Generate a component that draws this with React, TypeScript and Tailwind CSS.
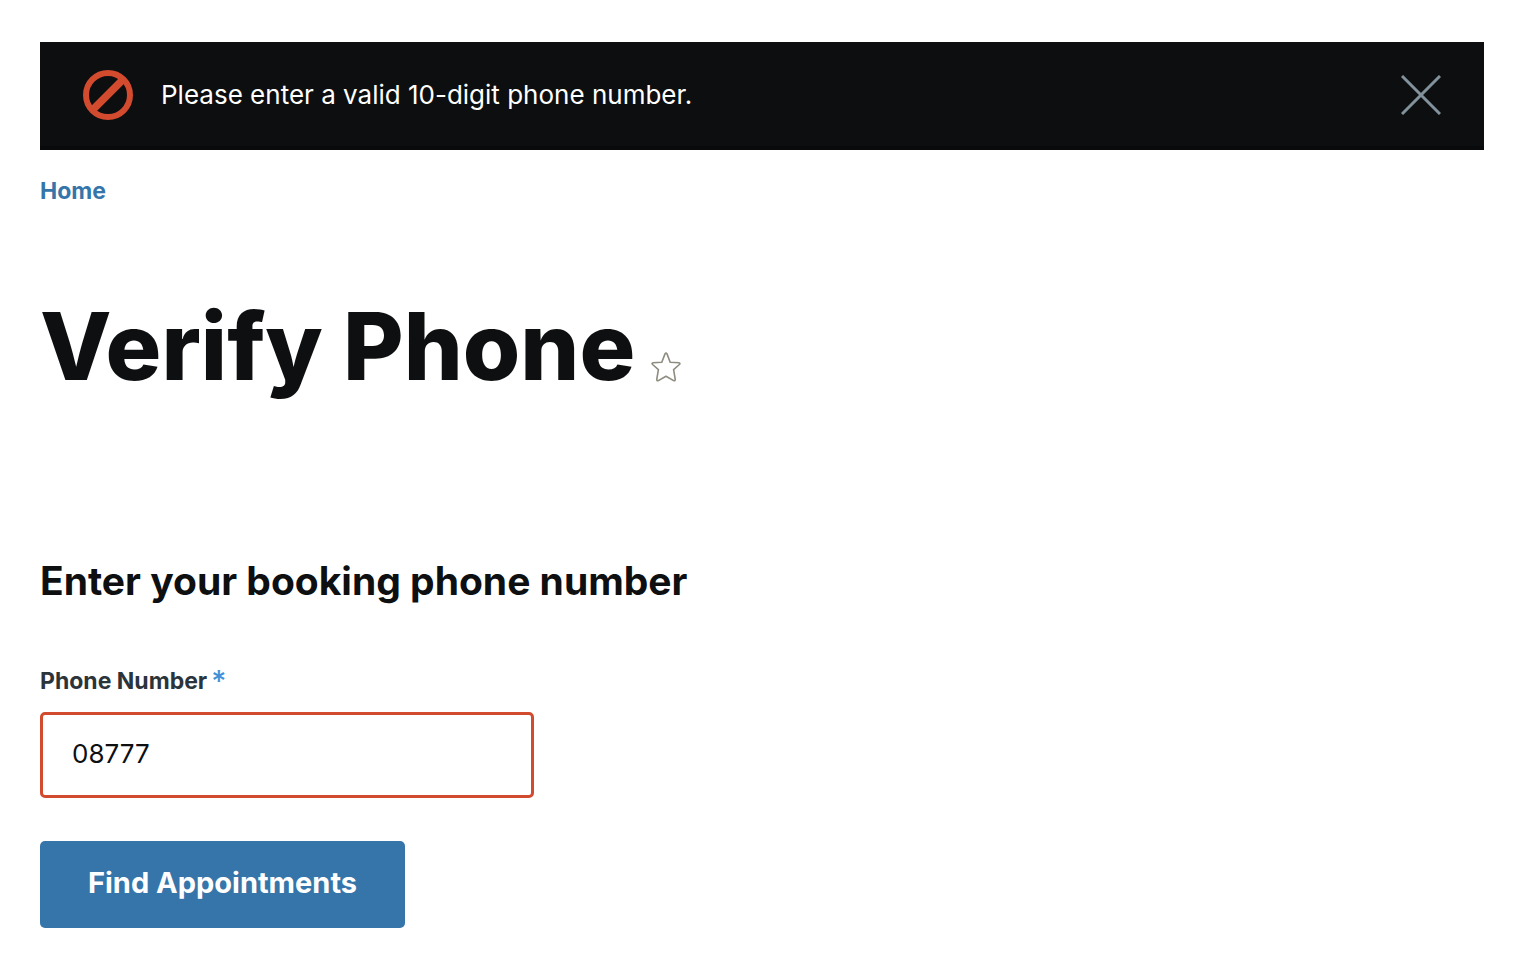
import { useState } from "react";

function BannedIcon() {
  return (
    <svg className="size-[50px] shrink-0" viewBox="0 0 50 50" fill="none" stroke="#d24b2f" aria-hidden="true">
      <circle cx="25" cy="25" r="22" strokeWidth="6" />
      <path d="M9.5 40 40 9.5" strokeWidth="7.5" />
    </svg>
  );
}

function CloseIcon() {
  return (
    <svg className="size-10" viewBox="0 0 40 40" fill="none" stroke="#82929c" strokeWidth="3" aria-hidden="true">
      <path d="M1 1l38 38M39 1L1 39" />
    </svg>
  );
}

function StarIcon() {
  return (
    <svg className="size-[30px]" viewBox="0 0 30 30" fill="none" stroke="#8e8c7f" strokeWidth="1.6" strokeLinejoin="round" aria-hidden="true">
      <path d="M14 1.9Q15 .4 16 1.9L19.2 10.3 27.9 10.7Q29.7 11.1 28.4 12.5L22.6 17.6 24.2 27.2Q24.3 29.2 22.6 28.6L15 24.2 7.4 28.6Q5.7 29.2 5.8 27.2L7.4 17.6 1.6 12.5Q.3 11.1 2.1 10.7L10.8 10.3Z" />
    </svg>
  );
}

export default function App() {
  const [phone, setPhone] = useState("08777");
  const [alertOpen, setAlertOpen] = useState(true);

  return (
    <div className="min-h-screen bg-white pt-[42px] pr-[38px] pb-7 pl-10 font-['Inter',sans-serif] text-[#0d0f10]">
      {alertOpen && (
        <div role="alert" className="flex items-center justify-between border-b-4 border-[#090a0b] bg-[#0c0e0f] pt-7 pr-[43px] pb-[26px] pl-[43px]">
          <div className="flex items-center gap-7">
            <BannedIcon />
            <p className="text-[26px] leading-8 text-white">Please enter a valid 10-digit phone number.</p>
          </div>
          <button type="button" aria-label="Close" onClick={() => setAlertOpen(false)}>
            <CloseIcon />
          </button>
        </div>
      )}

      <nav aria-label="Breadcrumb" className="mt-[25px]">
        <a href="#home" className="block w-fit text-[23px] leading-8 font-bold text-[#3675aa]">Home</a>
      </nav>

      <main>
        <div className="mt-[79px] flex items-end gap-4">
          <h1 className="text-[93px] leading-[120px] font-extrabold">Verify Phone</h1>
          <button type="button" aria-label="Add to favorites" className="pb-6">
            <StarIcon />
          </button>
        </div>

        <form noValidate onSubmit={(event) => event.preventDefault()} className="mt-[149px]">
          <h2 className="text-[39px] leading-[52px] font-bold">Enter your booking phone number</h2>
          <div className="mt-[58px] flex items-center gap-1 leading-8">
            <label htmlFor="phone" className="text-[23px] font-bold text-[#2b343b]">Phone Number</label>
            <span aria-hidden="true" className="text-[29px] font-medium text-[#4291d8]">*</span>
          </div>
          <input
            id="phone"
            type="tel"
            required
            aria-invalid="true"
            value={phone}
            onChange={(event) => setPhone(event.target.value)}
            className="mt-[15px] block h-[86px] w-full max-w-[494px] rounded-[5px] border-3 border-[#d24b2f] bg-white px-[29px] pb-1 text-[26px] outline-none"
          />
          <button type="submit" className="mt-[43px] block h-[87px] w-full max-w-[365px] rounded-[5px] bg-[#3675aa] pb-1 text-[29px] font-bold text-white">
            Find Appointments
          </button>
        </form>
      </main>
    </div>
  );
}
